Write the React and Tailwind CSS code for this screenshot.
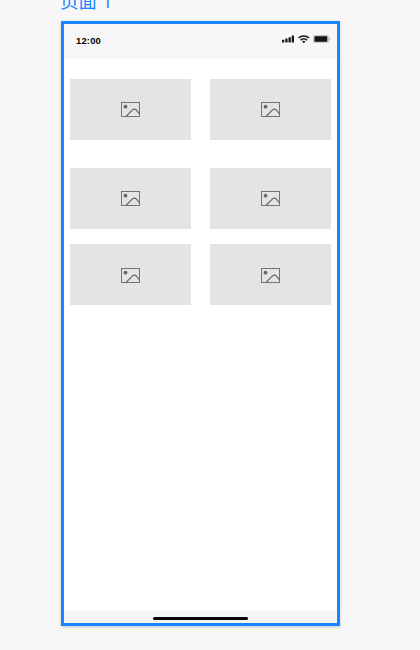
function ImageIcon() {
  return (
    <svg width="19" height="15" viewBox="0 0 19 15" fill="none" stroke="#686868">
      <rect x="0.5" y="0.5" width="18" height="14" strokeWidth="0.9" />
      <circle cx="4.5" cy="4.7" r="1.9" fill="#686868" stroke="none" />
      <path d="M5 14.5L11.2 8.1C12.6 6.7 14.2 6.7 15.4 8.1L18.5 11.8" strokeWidth="1.2" />
    </svg>
  );
}

function Tile({ className = "" }) {
  return (
    <div className={`flex h-[61px] w-[121px] items-center justify-center bg-[#e4e4e4] ${className}`}>
      <ImageIcon />
    </div>
  );
}

function Row({ tileClass }) {
  return (
    <div className="flex justify-between">
      <Tile className={tileClass} />
      <Tile className={tileClass} />
    </div>
  );
}

function StatusIcons() {
  return (
    <svg width="49" height="9" viewBox="0 0 49 9" fill="#151515">
      <rect x="0" y="4.7" width="2.3" height="2.8" rx="0.4" />
      <rect x="3.3" y="3.6" width="2.3" height="3.9" rx="0.4" />
      <rect x="6.5" y="2.3" width="2.3" height="5.2" rx="0.4" />
      <rect x="9.7" y="0.5" width="2.3" height="7" rx="0.4" />
      <g fill="none" stroke="#151515" strokeWidth="1.5">
        <path d="M16.6 3.1C19.4 0.2 24.2 0.2 27 3.1" />
        <path d="M18.6 5.1C20.4 3.3 23.2 3.3 25 5.1" />
      </g>
      <path d="M20 6.3Q21.8 5 23.6 6.3L21.8 8.2Z" />
      <rect x="31" y="0" width="16" height="8" rx="2" fill="#c6c6c6" />
      <path d="M47.4 2.6Q48.6 3 48.6 4T47.4 5.6Z" fill="#b5b5b5" />
      <rect x="32.5" y="1.3" width="12.7" height="5.4" rx="0.6" />
    </svg>
  );
}

export default function App() {
  return (
    <div className="flex h-[650px] w-[420px] flex-col overflow-hidden bg-[#f7f7f7] pl-[60px]">
      <div className="h-[21px] shrink-0">
        <div className="-mt-[12px] flex h-[24px] gap-[5px] text-[18.5px] leading-[24px] text-[#1785ff]">
          <span className="font-['Noto_Sans_CJK_SC',sans-serif] font-normal">页面</span>
          <span className="pt-px font-['Open_Sans',sans-serif] font-normal">1</span>
        </div>
      </div>
      <div className="ml-px flex h-[605px] w-[279px] shrink-0 flex-col border-[3px] border-[#1785ff] bg-white shadow-[0_1px_3px_rgba(0,0,0,0.2)]">
        <header className="flex h-[35px] shrink-0 justify-between bg-[#f7f7f7] pr-[6px] pl-3">
          <span className="pt-[11px] font-['Liberation_Sans',sans-serif] text-[9.4px] leading-[12px] font-bold tracking-[0.2px] text-black">
            12:00
          </span>
          <div className="pt-[11px]">
            <StatusIcons />
          </div>
        </header>
        <main className="flex-1 px-[6px] pt-5">
          <Row />
          <div className="mt-7">
            <Row />
          </div>
          <div className="mt-[15px]">
            <Row tileClass="pt-px" />
          </div>
        </main>
        <footer className="flex h-3 shrink-0 justify-center bg-[#f7f7f7] pt-[6px]">
          <div className="h-[3px] w-[95px] rounded-full bg-black" />
        </footer>
      </div>
    </div>
  );
}
